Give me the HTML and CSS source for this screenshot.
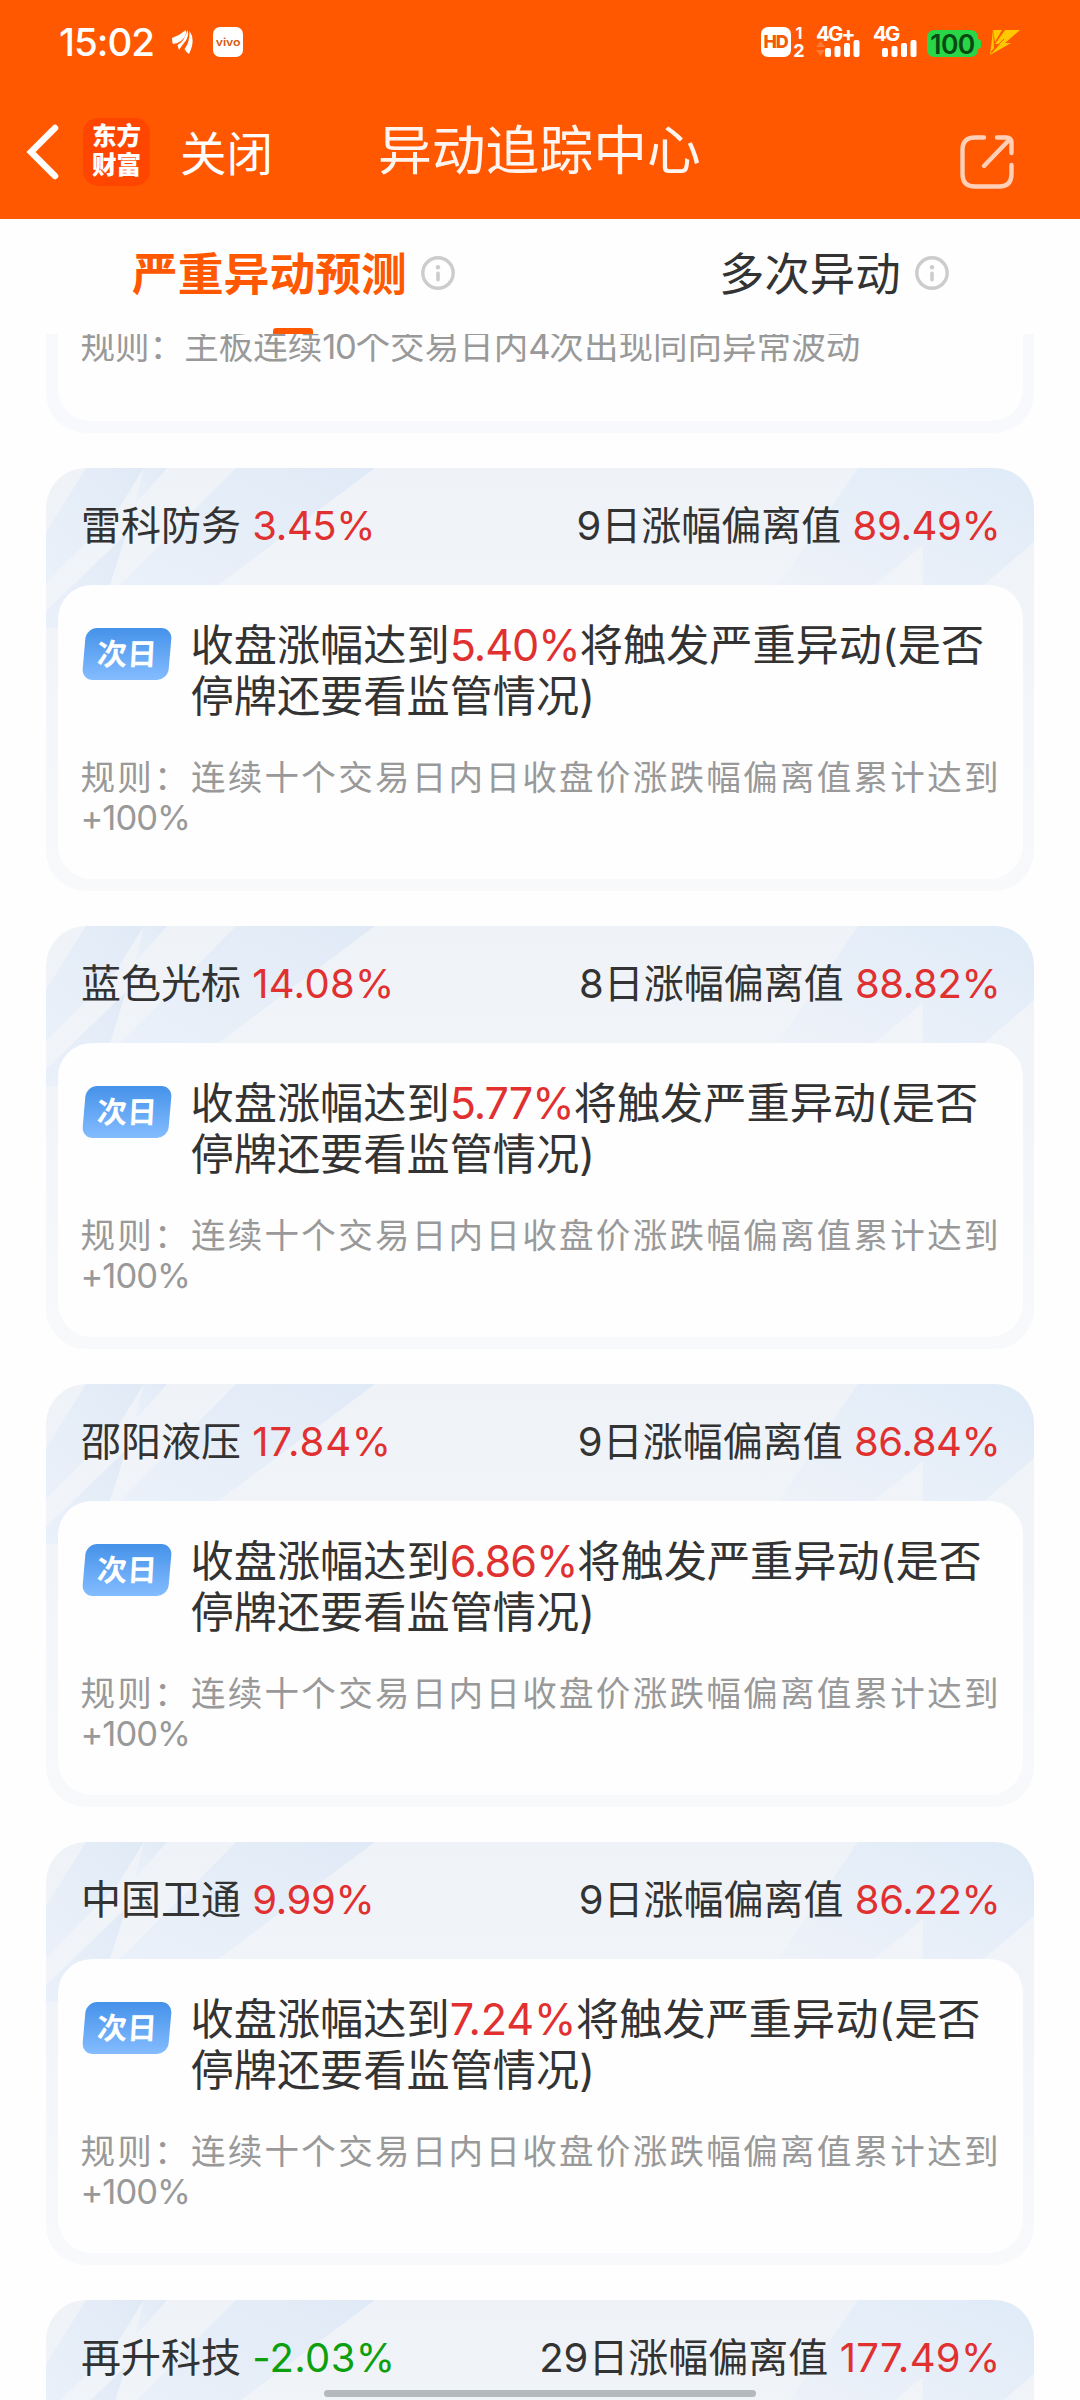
FILE: index.html
```html
<!DOCTYPE html>
<html lang="zh-CN">
<head>
<meta charset="utf-8">
<title>异动追踪中心</title>
<link rel="stylesheet" href="styles.css">
</head>
<body>
<svg class="defs" width="0" height="0" aria-hidden="true">
  <defs>
    <linearGradient id="shadeLeft" x1="1" y1="0" x2="0" y2="1">
      <stop offset="0" stop-color="#e0eaf6"/><stop offset="1" stop-color="#ebf1fa"/>
    </linearGradient>
    <linearGradient id="shadeRight" x1="1" y1="0" x2="0" y2="1">
      <stop offset="0" stop-color="#dfebf8"/><stop offset="1" stop-color="#eef2f9"/>
    </linearGradient>
    <symbol id="shards" viewBox="0 0 988 160">
      <g fill="url(#shadeLeft)">
        <path d="M40 0H98L70 45L0 115V64Z"/>
        <path d="M98 0H121L89 36Z"/>
        <path d="M80 66L64 117L30 160H0V143Z"/>
        <path d="M190 0H329L172 117H74Z"/>
      </g>
      <path d="M812 0H988V74L938 117H877V77L828 117H732Z" fill="url(#shadeRight)"/>
    </symbol>
    <symbol id="info" viewBox="0 0 34 34">
      <circle cx="17" cy="17" r="15.2" fill="none" stroke="#ccc" stroke-width="3.4"/>
      <circle cx="17" cy="11.3" r="2.2" fill="#ccc"/>
      <rect x="15.2" y="15.4" width="3.6" height="10" rx="1.6" fill="#ccc"/>
    </symbol>
  </defs>
</svg>

<header class="header">
  <div class="status">
    <span class="time">15:02</span>
    <svg class="plane" viewBox="0 0 22 25" fill="#fff">
      <path d="M0 8Q8 5 14 0Q15 6 9 11Q5 14 1 14Q0 12 0 8Z"/>
      <path d="M15.500 0Q18 6 12 13Q9 17 7 20Q6 17 5.500 15Q12 12 15.500 0Z"/>
      <path d="M17.500 1Q24 10 17 24Q14 22 12.500 19Q18 12 17.500 1Z"/>
    </svg>
    <span class="vivo"><b>vivo</b></span>
    <span class="spacer"></span>
    <span class="hd"><b>HD</b></span>
    <span class="sims"><i>1</i><i>2</i></span>
    <span class="net net-a">
      <em>4G+</em>
      <svg viewBox="0 0 44 17" width="44" height="17"><path d="M0 7L4.500 1L9 7ZM0 10L4.500 16L9 10Z" fill="#ff7a38"/><g fill="#fff"><rect x="9" y="8" width="6" height="9" rx="2"/><rect x="18.500" y="6" width="6" height="11" rx="2"/><rect x="28" y="3" width="6" height="14" rx="2"/><rect x="37.500" y="0" width="6" height="17" rx="2"/></g></svg>
    </span>
    <span class="net net-b">
      <em>4G</em>
      <svg viewBox="0 0 44 17" width="44" height="17"><g fill="#fff"><rect x="9" y="8" width="6" height="9" rx="2"/><rect x="18.500" y="6" width="6" height="11" rx="2"/><rect x="28" y="3" width="6" height="14" rx="2"/><rect x="37.500" y="0" width="6" height="17" rx="2"/></g></svg>
    </span>
    <span class="battery">100</span><span class="nub"></span>
    <svg class="bolt" viewBox="0 0 30 25" fill="#ffc800"><path d="M3 0H12L5 12ZM15 0H30L15 13H21L0 25L10 14H5Z"/><path d="M3 0L0 25L4 18Z"/><path d="M1 22L14 9" stroke="#ff5800" stroke-width="1"/></svg>
  </div>
  <nav class="nav">
    <svg class="back" viewBox="0 0 34 56"><path d="M29 4L5 28L29 52" fill="none" stroke="#fff" stroke-width="6.500" stroke-linecap="round" stroke-linejoin="miter"/></svg>
    <span class="logo"><span>东方</span><span>财富</span></span>
    <span class="close">关闭</span>
    <h1 class="title">异动追踪中心</h1>
    <svg class="share" viewBox="0 0 54 54" fill="none" stroke="#ffcfb8" stroke-width="4.400" stroke-linecap="round"><path d="M24 2.500H15Q2.500 2.500 2.500 15V39Q2.500 51.500 15 51.500H39Q51.500 51.500 51.500 39V30M37 2.500H46Q51.500 2.500 51.500 8V18M24 31L49 5"/></svg>
  </nav>
</header>

<div class="tabs">
  <div class="tab tab-on"><span>严重异动预测</span><svg class="info"><use href="#info"/></svg></div>
  <div class="tab"><span>多次异动</span><svg class="info"><use href="#info"/></svg></div>
</div>

<main class="list">
  <section class="card card-cut">
    <div class="inner"><p class="rule">规则：主板连续<span class="n">10</span>个交易日内<span class="n">4</span>次出现同向异常波动</p></div>
  </section>

  <section class="card">
    <svg class="shards"><use href="#shards"/></svg>
    <div class="head"><span>雷科防务 <b class="up">3.45%</b></span><span><span class="n">9</span>日涨幅偏离值 <b class="up">89.49%</b></span></div>
    <div class="inner">
      <div class="row"><span class="badge"><i>次日</i></span><p class="text">收盘涨幅达到<b class="up">5.40%</b>将触发严重异动(是否<br>停牌还要看监管情况)</p></div>
      <p class="rule rule-wide">规则：连续十个交易日内日收盘价涨跌幅偏离值累计达到 <span class="n">+100%</span></p>
    </div>
  </section>

  <section class="card">
    <svg class="shards"><use href="#shards"/></svg>
    <div class="head"><span>蓝色光标 <b class="up loose">14.08%</b></span><span><span class="n">8</span>日涨幅偏离值 <b class="up">88.82%</b></span></div>
    <div class="inner">
      <div class="row"><span class="badge"><i>次日</i></span><p class="text">收盘涨幅达到<b class="up">5.77%</b>将触发严重异动(是否<br>停牌还要看监管情况)</p></div>
      <p class="rule rule-wide">规则：连续十个交易日内日收盘价涨跌幅偏离值累计达到 <span class="n">+100%</span></p>
    </div>
  </section>

  <section class="card">
    <svg class="shards"><use href="#shards"/></svg>
    <div class="head"><span>邵阳液压 <b class="up looser">17.84%</b></span><span><span class="n">9</span>日涨幅偏离值 <b class="up">86.84%</b></span></div>
    <div class="inner">
      <div class="row"><span class="badge"><i>次日</i></span><p class="text">收盘涨幅达到<b class="up">6.86%</b>将触发严重异动(是否<br>停牌还要看监管情况)</p></div>
      <p class="rule rule-wide">规则：连续十个交易日内日收盘价涨跌幅偏离值累计达到 <span class="n">+100%</span></p>
    </div>
  </section>

  <section class="card">
    <svg class="shards"><use href="#shards"/></svg>
    <div class="head"><span>中国卫通 <b class="up">9.99%</b></span><span><span class="n">9</span>日涨幅偏离值 <b class="up">86.22%</b></span></div>
    <div class="inner">
      <div class="row"><span class="badge"><i>次日</i></span><p class="text">收盘涨幅达到<b class="up wide">7.24%</b>将触发严重异动(是否<br>停牌还要看监管情况)</p></div>
      <p class="rule rule-wide">规则：连续十个交易日内日收盘价涨跌幅偏离值累计达到 <span class="n">+100%</span></p>
    </div>
  </section>

  <section class="card card-last">
    <svg class="shards"><use href="#shards"/></svg>
    <div class="head"><span>再升科技 <b class="down loose">-2.03%</b></span><span><span class="n">29</span>日涨幅偏离值 <b class="up loose">177.49%</b></span></div>
  </section>
</main>
<div class="homebar"></div>
</body>
</html>
```
FILE: styles.css
```css
* { box-sizing: border-box; margin: 0; padding: 0; }
html, body { height: 2400px; overflow: hidden; }
body {
  position: relative;
  width: 1080px;
  display: flex;
  flex-direction: column;
  background: #fefefe;
  color: #333;
  font-family: Inter, "Noto Sans CJK SC", sans-serif;
}
i, em { font-style: normal; }
b { font-weight: 400; }
.defs { position: absolute; }

.header { height: 219px; background: #ff5800; color: #fff; }
.status { height: 84px; padding: 0 60px 0 59px; display: flex; align-items: center; }
.time { font-size: 38.5px; line-height: 84px; width: 113px; letter-spacing: -1px; font-weight: 500; }
.plane { width: 22px; height: 25px; margin-right: 19px; }
.vivo {
  width: 30px; height: 30px; border-radius: 7px; background: #fff; color: #d8590f;
  display: flex; align-items: center; justify-content: center;
  font-size: 11px; line-height: 30px;
}
.vivo b { font-weight: 600; transform: scaleX(1.12) translateY(-0.5px); }
.spacer { flex: 1; }
.hd {
  width: 30px; height: 30px; border-radius: 7px; background: #fff; color: #f25a0c;
  display: flex; align-items: center; justify-content: center;
  font-size: 18px; line-height: 30px; letter-spacing: -1.2px;
}
.hd b { font-weight: 800; transform: translateX(-0.5px); }
.sims { width: 12px; margin: 0 11px 0 2px; height: 30px; display: flex; flex-direction: column; justify-content: space-between; font-size: 16px; line-height: 13px; font-weight: 700; text-align: center; }
.sims i:last-child { font-size: 18px; }
.net { width: 44px; height: 30px; display: flex; flex-direction: column; justify-content: space-between; }
.net em { font-size: 20.5px; line-height: 14px; font-weight: 700; letter-spacing: -1.9px; white-space: nowrap; }
.net svg { display: block; margin-top: -1px; }
.net-a { margin-right: 13px; }
.net-b { margin-right: 10px; }
.battery {
  width: 51px; height: 27px; margin-top: 3px; border-radius: 7px; background: #28d648; color: #0a4a12;
  font-size: 26.5px; line-height: 28px; text-align: center; font-weight: 600; letter-spacing: -0.6px;
}
.nub { width: 3px; height: 10px; margin-top: 3px; border-radius: 0 3px 3px 0; background: #28d648; }
.bolt { width: 30px; height: 25px; margin-left: 9px; }

.nav { height: 135px; padding: 0 66px 0 26px; display: flex; align-items: center; }
.back { width: 34px; height: 56px; margin-right: 23px; }
.logo {
  width: 67px; height: 68px; border-radius: 15px; background: #ff4600;
  display: flex; flex-direction: column; align-items: center; justify-content: center;
  font-size: 24.5px; line-height: 29px; font-weight: 900; padding-bottom: 2px;
}
.close { font-size: 46.5px; line-height: 60px; margin: 4px 0 0 30px; width: 198px; }
.title { font-size: 53.8px; line-height: 70px; font-weight: 400; color: #fff5f0; flex: 1; white-space: nowrap; margin-top: -1px; }
.share { width: 54px; height: 54px; margin-top: 20px; }

.tabs { height: 115px; display: flex; font-size: 45.4px; }
.tab { position: relative; flex: none; width: 587px; padding: 0 0 3px 132px; display: flex; align-items: center; line-height: 60px; }
.tab + .tab { width: 493px; }
.tab span { white-space: nowrap; }
.tab-on { color: #ff5800; font-weight: 700; font-size: 45.8px; }
.tab-on::after {
  content: ""; position: absolute; left: 273px; bottom: 0;
  width: 40px; height: 6px; border-radius: 3px 3px 0 0; background: #ff5800;
}
.info { width: 34px; height: 34px; margin: -4px 0 0 14px; }

.list { flex: 1; overflow: hidden; padding: 0 46px; display: flex; flex-direction: column; gap: 35px; }
.card {
  position: relative; flex: none; height: 423px; padding: 0 11.5px 12px;
  display: flex; flex-direction: column;
  border-radius: 40px; overflow: hidden;
  background: linear-gradient(#eff3f8, #f1f5fa 40%, #f8f9fb);
}
.card-cut { height: 99px; border-radius: 0 0 40px 40px; background: #f7f9fc; }
.card-cut .inner { border-radius: 0 0 32px 32px; padding-top: 0; }
.card-cut .rule { margin-top: -7px; }
.card-last { height: 423px; }
.shards { position: absolute; left: 0; top: 0; width: 988px; height: 160px; }
.head {
  position: relative; height: 117px; padding: 0 22px 0 23.5px;
  display: flex; justify-content: space-between;
  font-size: 40px; line-height: 115px; white-space: nowrap;
}
.head b { letter-spacing: -0.35px; }
.head .loose { letter-spacing: 0.3px; }
.head .looser { letter-spacing: 0.9px; }
.up { color: #e03030; }
.down { color: #0e9f0e; }
.inner { position: relative; flex: 1; border-radius: 34px; background: #fefefe; padding: 35px 24px 0 23px; }
.row { display: flex; }
.badge {
  position: relative; z-index: 0; width: 90px; height: 52px; margin: 8px 19px 0 1px;
  display: flex; align-items: center; justify-content: center;
  color: #fff; font-size: 30px; font-weight: 700; line-height: 52px;
}
.badge::before {
  content: ""; position: absolute; inset: 0 2px; z-index: -1;
  border-radius: 11px; transform: skewX(-5deg);
  background: linear-gradient(#4592e9, #84bcff);
}
.badge i { transform: skewX(-3deg); }
.text { font-size: 43.2px; line-height: 51.2px; white-space: nowrap; }
.text b { letter-spacing: -1px; }
.text .wide { letter-spacing: -0.2px; }
.rule { font-size: 34.56px; line-height: 40px; color: #999; white-space: nowrap; }
.rule .n { letter-spacing: -1.3px; }
.rule-wide { margin-top: 35.5px; white-space: normal; text-align: justify; }
.rule-wide .n { letter-spacing: -1px; }

.homebar {
  position: absolute; left: 324px; bottom: 3px; width: 432px; height: 7px;
  border-radius: 4px; background: #b4b9bc;
}
```
